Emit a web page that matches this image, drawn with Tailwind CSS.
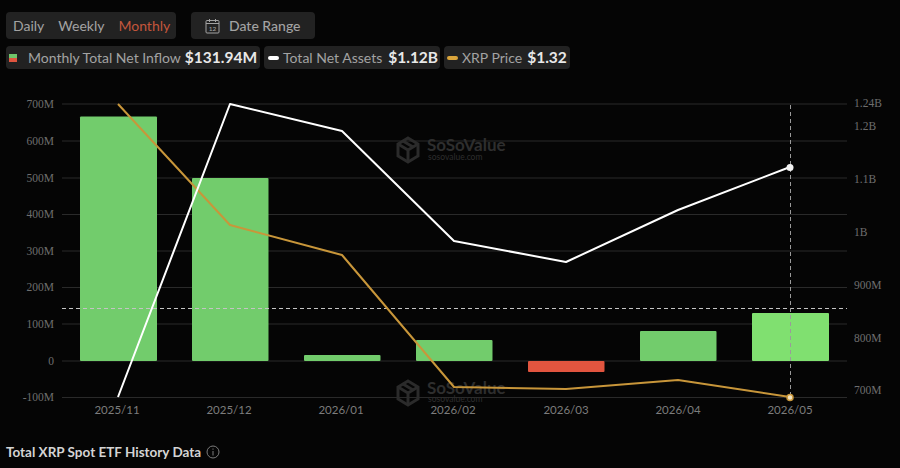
<!DOCTYPE html>
<html lang="en">
<head>
    <meta charset="UTF-8">
    <title>Total XRP Spot ETF</title>
    <script src="https://cdn.jsdelivr.net/npm/@tailwindcss/browser@4"></script>
</head>
<body class="bg-[#050505] font-['Lato','Noto_Sans',sans-serif] w-[900px] h-[468px] overflow-hidden">
    <!-- Filters -->
    <div class="pt-3 pl-1.5 flex gap-[15px]">
        <div class="h-[27px] w-[170px] bg-[#222222] rounded flex items-center pl-[7px] gap-[14px] text-[14px] text-[#a3a3a3]">
            <span>Daily</span>
            <span>Weekly</span>
            <span class="text-[#c2563c]">Monthly</span>
        </div>
        <div class="h-[27px] w-[124px] bg-[#222222] rounded flex items-center pl-3.5 gap-[9px] text-[14px] font-medium text-[#a3a3a3]">
            <svg width="15" height="16" viewBox="0 0 15 16" fill="none" stroke="#a3a3a3" stroke-width="1">
                <rect x="1" y="2.5" width="13" height="12.5" rx="1"/>
                <path d="M1 5.5h13M4.5 1v3M10.5 1v3"/>
                <text x="7.5" y="12.8" text-anchor="middle" font-size="6.5" fill="#a3a3a3" stroke="none">12</text>
            </svg>
            <span>Date Range</span>
        </div>
    </div>
    <!-- Legend -->
    <div class="mt-[7px] pl-1.5 flex gap-1 whitespace-nowrap">
        <div class="h-[23px] w-[254px] bg-[#222222] rounded flex items-center pl-[3px] text-[14px] text-[#a3a3a3]">
            <span class="w-2 h-2 flex flex-col mr-[11px]">
                <span class="h-1 bg-[#6fc56a]"></span>
                <span class="h-1 bg-[#e0553f]"></span>
            </span>
            <span>Monthly Total Net Inflow</span>
            <span class="ml-[4px] text-[15.5px] font-bold text-[#e8e8e8]">$131.94M</span>
        </div>
        <div class="h-[23px] w-[176px] bg-[#222222] rounded flex items-center pl-1 text-[14px] text-[#a3a3a3]">
            <span class="w-[11px] h-1 rounded-full bg-white mr-[4px]"></span>
            <span>Total Net Assets</span>
            <span class="ml-[6px] text-[15.5px] font-bold text-[#e8e8e8]">$1.12B</span>
        </div>
        <div class="h-[23px] w-[126px] bg-[#222222] rounded flex items-center pl-[3px] text-[14px] text-[#a3a3a3]">
            <span class="w-[11px] h-1 rounded-full bg-[#d9a43b] mr-[4px]"></span>
            <span>XRP Price</span>
            <span class="ml-[5px] text-[15.5px] font-bold text-[#e8e8e8]">$1.32</span>
        </div>
    </div>
    <!-- Chart -->
    <svg width="900" height="356" viewBox="0 69 900 356" class="block">
        <g stroke="#2a2a2a" stroke-width="1">
            <path d="M62 104H847M62 141H847M62 178H847M62 214.500H847M62 251H847M62 287.500H847M62 324H847M62 361H847M62 397.500H847"/>
        </g>
        <!-- watermarks -->
        <g fill="none" stroke="#2b2b2b" stroke-width="3">
            <path d="M408 138l10 6v12l-10 6-10-6v-12z"/>
            <path d="M398 144l10 6 10-6M408 150v12M403 141l10 6"/>
            <path d="M408 381l10 6v12l-10 6-10-6v-12z"/>
            <path d="M398 387l10 6 10-6M408 393v12M403 384l10 6"/>
        </g>
        <g class="font-['Lato',sans-serif]" fill="#2e2e2e">
            <text x="427" y="151" font-size="17" font-weight="700">SoSoValue</text>
            <text x="428" y="160" font-size="8.500">sosovalue.com</text>
            <text x="427" y="394" font-size="17" font-weight="700">SoSoValue</text>
            <text x="428" y="402" font-size="8.500">sosovalue.com</text>
        </g>
        <!-- bars -->
        <g fill="#72cc6c">
            <rect x="80" y="116.500" width="77" height="244.500" rx="1"/>
            <rect x="192" y="178" width="76.500" height="183" rx="1"/>
            <rect x="304" y="355" width="76.500" height="6" rx="1"/>
            <rect x="416" y="340" width="76.500" height="21" rx="1"/>
            <rect x="640" y="331" width="76.500" height="30" rx="1"/>
            <rect x="752" y="313" width="77" height="48" rx="1" fill="#80e070"/>
        </g>
        <rect x="528" y="361" width="76.500" height="11" rx="1" fill="#e2553f"/>
        <!-- crosshair -->
        <path d="M62 308.500H847" stroke="#c4c4c4" stroke-width="1" stroke-dasharray="4 3"/>
        <path d="M790.500 105V397" stroke="#9a9a9a" stroke-width="1" stroke-dasharray="4 3"/>
        <!-- lines -->
        <polyline points="118,104 230,225 342,255 454,387 566,389 678,380 790,397" fill="none" stroke="#c8963a" stroke-width="2" stroke-linejoin="round"/>
        <polyline points="118,397 230,104 342,131 454,241 566,262 678,210 790,167" fill="none" stroke="#ffffff" stroke-width="2" stroke-linejoin="round"/>
        <circle cx="790" cy="167.500" r="3.500" fill="#f2f2f2"/>
        <circle cx="790" cy="397.500" r="3" fill="#f4e4c0" stroke="#c8963a" stroke-width="1.500"/>
        <!-- left axis -->
        <g class="font-['Liberation_Serif',serif]" fill="#6e6e6e" font-size="11.500" text-anchor="end">
            <text x="54" y="108">700M</text>
            <text x="54" y="144.500">600M</text>
            <text x="54" y="181.500">500M</text>
            <text x="54" y="218">400M</text>
            <text x="54" y="254.500">300M</text>
            <text x="54" y="291">200M</text>
            <text x="54" y="328">100M</text>
            <text x="54" y="364.500">0</text>
            <text x="54" y="401">-100M</text>
        </g>
        <!-- right axis -->
        <g class="font-['Liberation_Serif',serif]" fill="#6e6e6e" font-size="11.500">
            <text x="854" y="107">1.24B</text>
            <text x="854" y="130">1.2B</text>
            <text x="854" y="183">1.1B</text>
            <text x="854" y="236">1B</text>
            <text x="854" y="289">900M</text>
            <text x="854" y="342">800M</text>
            <text x="854" y="394">700M</text>
        </g>
        <!-- x axis -->
        <g class="font-['Lato',sans-serif]" fill="#7c7c7c" font-size="11.500" text-anchor="middle">
            <text x="117" y="414">2025/11</text>
            <text x="229" y="414">2025/12</text>
            <text x="341" y="414">2026/01</text>
            <text x="453" y="414">2026/02</text>
            <text x="566" y="414">2026/03</text>
            <text x="678" y="414">2026/04</text>
            <text x="790" y="414">2026/05</text>
        </g>
    </svg>
    <!-- Section title -->
    <div class="mt-[17px] pl-1.5 flex items-center gap-[5px]">
        <h2 class="text-[13.5px] leading-[20px] font-bold text-[#d4d4d4]">Total XRP Spot ETF History Data</h2>
        <svg width="14" height="14" viewBox="0 0 14 14" fill="none" stroke="#7c7c7c" stroke-width="1">
            <circle cx="7" cy="7" r="6"/>
            <path d="M7 6v4.500M7 3.500v1.200"/>
        </svg>
    </div>
</body>
</html>
